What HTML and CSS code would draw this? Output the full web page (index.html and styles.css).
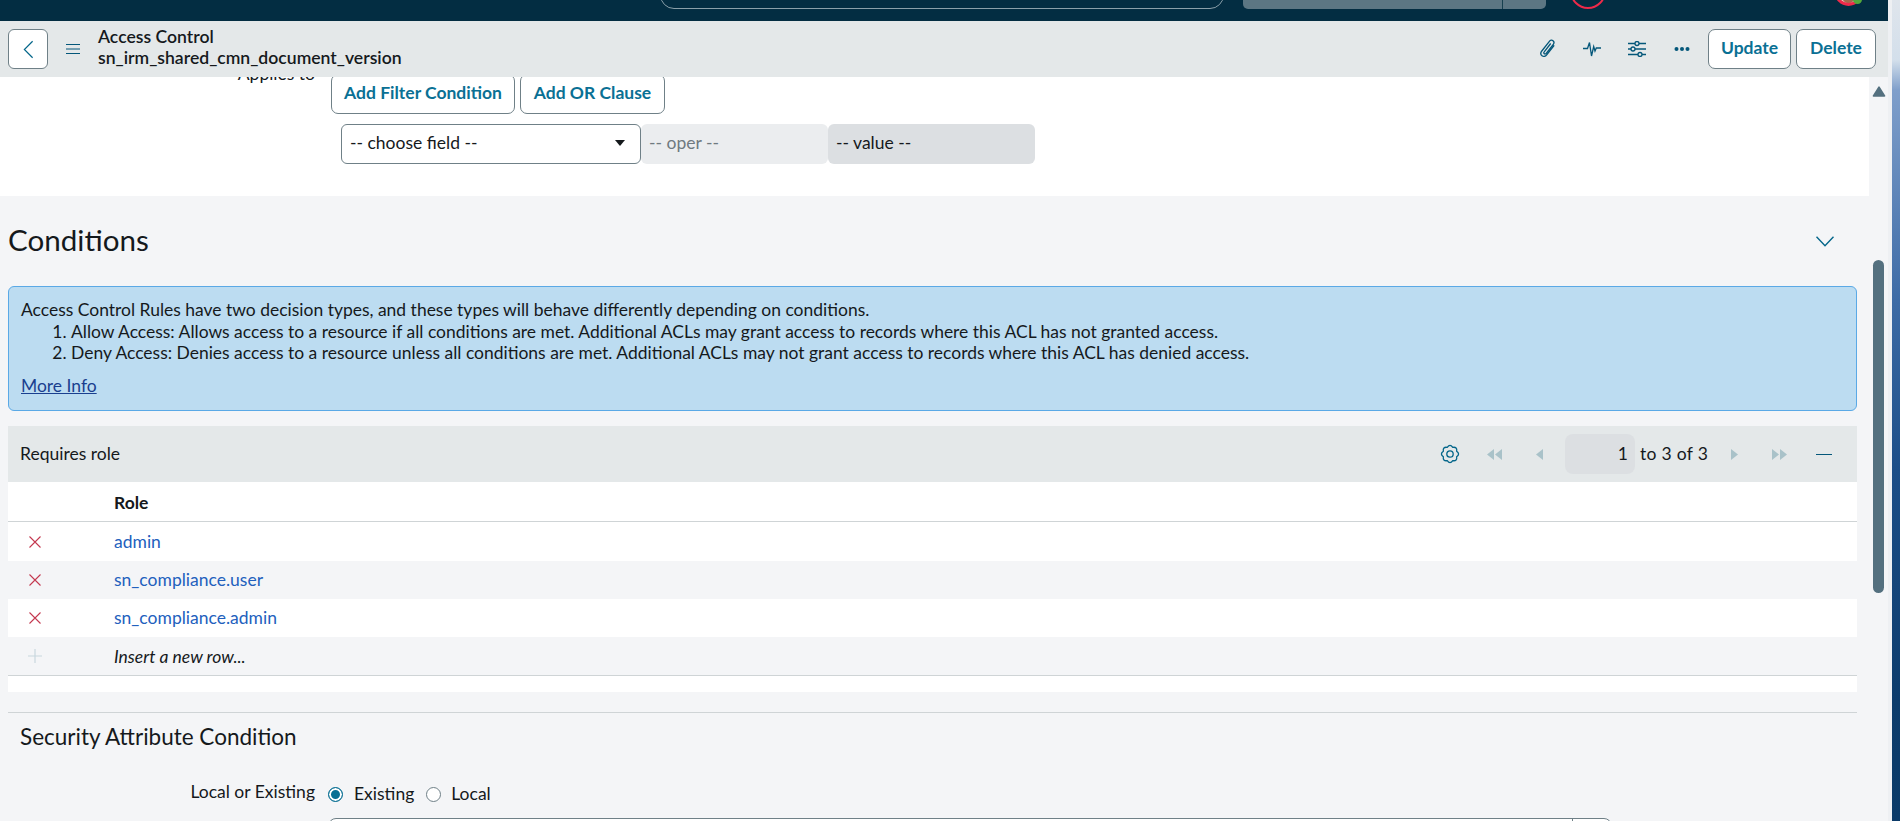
FILE: index.html
```html
<!DOCTYPE html>
<html lang="en">
<head>
<meta charset="utf-8">
<title>Access Control</title>
<link rel="stylesheet" href="styles.css">
</head>
<body>
<div class="screen">
  <div class="app">
    <div class="topbar">
      <div class="top-search"></div>
      <div class="top-scope"><span class="top-scope-main"></span><span class="top-scope-end"></span></div>
      <div class="top-ring"></div>
      <div class="top-avatar"><span class="avatar-face"></span><span class="avatar-dot"></span></div>
    </div>

    <header class="formbar">
      <button class="back-btn" aria-label="Back">
        <svg class="ico-back" viewBox="0 0 12 20"><path d="M10.5 1 1.5 10l9 9"/></svg>
      </button>
      <svg class="ico-menu" viewBox="0 0 14 10"><path d="M0 .5h14M0 5h14M0 9.500h14"/></svg>
      <div class="form-title">
        <div>Access Control</div>
        <div>sn_irm_shared_cmn_document_version</div>
      </div>
      <div class="form-actions">
        <svg class="ico ico-clip" viewBox="0 0 18 20"><path d="M15.200 6.300 7.700 15.900c-1.300 1.700-3.300 2-4.700.9-1.400-1.100-1.500-3.100-.2-4.800l7.600-9.700c.9-1.200 2.500-1.500 3.600-.6 1.100.9 1.200 2.400.3 3.600l-7.100 9.100c-.5.6-1.300.8-1.900.3-.6-.5-.6-1.300-.1-1.900l6.500-8.300"/></svg>
        <svg class="ico ico-pulse" viewBox="0 0 18 18"><path d="M0 8.500h4.500L6.500 2.500 8.500 16l2.200-9.500 1.300 4.500 1.300-3H18"/></svg>
        <svg class="ico ico-sliders" viewBox="0 0 18 16"><path d="M0 2.500h7M11 2.500h7M0 8h3M7 8h11M0 13.500h10M14 13.500h4"/><circle cx="9" cy="2.500" r="2"/><circle cx="5" cy="8" r="2"/><circle cx="12" cy="13.500" r="2"/></svg>
        <svg class="ico ico-dots" viewBox="0 0 16 6"><circle cx="2.500" cy="3" r="2"/><circle cx="8" cy="3" r="2"/><circle cx="13.500" cy="3" r="2"/></svg>
        <button class="btn btn-update">Update</button>
        <button class="btn btn-delete">Delete</button>
      </div>
    </header>

    <div class="viewport">
      <main class="content">
        <section class="filter">
          <div class="filter-head">
            <span class="filter-label">Applies to</span>
            <button class="btn btn-filter">Add Filter Condition</button>
            <button class="btn btn-or">Add OR Clause</button>
          </div>
          <div class="filter-row">
            <div class="fld-choose"><span>-- choose field --</span><i class="caret"></i></div>
            <div class="fld-oper">-- oper --</div>
            <div class="fld-value">-- value --</div>
          </div>
        </section>

        <div class="cond-head">
          <h2>Conditions</h2>
          <svg class="ico-chev" viewBox="0 0 18 11"><path d="M.5.8 9 9.800 17.500.8"/></svg>
        </div>

        <div class="notice">
          <div>Access Control Rules have two decision types, and these types will behave differently depending on conditions.</div>
          <ol>
            <li>Allow Access: Allows access to a resource if all conditions are met. Additional ACLs may grant access to records where this ACL has not granted access.</li>
            <li>Deny Access: Denies access to a resource unless all conditions are met. Additional ACLs may not grant access to records where this ACL has denied access.</li>
          </ol>
          <a class="more" href="#">More Info</a>
        </div>

        <div class="related">
          <div class="rel-bar">
            <span class="rel-title">Requires role</span>
            <div class="pager">
              <svg class="ico-gear" viewBox="-1 -1 22 22"><path d="M16.650 7.240Q20.500 10 16.650 12.760 17.420 17.420 12.760 16.650 10 20.500 7.240 16.650 2.580 17.420 3.350 12.760-.5 10 3.350 7.240 2.580 2.580 7.240 3.350 10-.5 12.760 3.350 17.420 2.580 16.650 7.240Z"/><circle cx="10" cy="10" r="3.200"/></svg>
              <svg class="pg pg-first" viewBox="0 0 15 11"><path d="M7 0v11L0 5.500ZM15 0v11L8 5.500Z"/></svg>
              <svg class="pg pg-prev" viewBox="0 0 7 11"><path d="M7 0v11L0 5.500Z"/></svg>
              <div class="pg-input">1</div>
              <span class="pg-text">to 3 of 3</span>
              <svg class="pg pg-next" viewBox="0 0 7 11"><path d="M0 0v11l7-5.500Z"/></svg>
              <svg class="pg pg-last" viewBox="0 0 15 11"><path d="M0 0v11l7-5.500ZM8 0v11l7-5.500Z"/></svg>
              <span class="pg-min"></span>
            </div>
          </div>
          <div class="tbl">
            <div class="tr th"><span class="c1"></span><span>Role</span></div>
            <div class="tr"><span class="c1"><svg class="ico-x" viewBox="0 0 12 12"><path d="m.5.500 11 11M11.500.500l-11 11"/></svg></span><a href="#">admin</a></div>
            <div class="tr alt"><span class="c1"><svg class="ico-x" viewBox="0 0 12 12"><path d="m.5.500 11 11M11.500.500l-11 11"/></svg></span><a href="#">sn_compliance.user</a></div>
            <div class="tr"><span class="c1"><svg class="ico-x" viewBox="0 0 12 12"><path d="m.5.500 11 11M11.500.500l-11 11"/></svg></span><a href="#">sn_compliance.admin</a></div>
            <div class="tr alt insert"><span class="c1"><svg class="ico-plus" viewBox="0 0 14 14"><path d="M7 0v14M0 7h14"/></svg></span><em>Insert a new row...</em></div>
            <div class="tbl-foot"></div>
          </div>
        </div>

        <section class="sac">
          <h3>Security Attribute Condition</h3>
          <div class="sac-row">
            <span class="sac-label">Local or Existing</span>
            <span class="radio radio-on"></span><span class="radio-text">Existing</span>
            <span class="radio"></span><span class="radio-text">Local</span>
          </div>
          <div class="sac-input"><span class="sac-input-end"></span></div>
        </section>
      </main>
      <aside class="vscroll">
        <svg class="sc-up" viewBox="0 0 12 10"><path d="M6 1 11 9H1Z"/></svg>
        <div class="sc-thumb"></div>
      </aside>
    </div>
  </div>
  <div class="strip"></div>
  <div class="desktop"></div>
</div>
</body>
</html>
```

FILE: styles.css
```css
* { box-sizing: border-box; }
html, body { margin: 0; padding: 0; height: 100%; overflow: hidden; }
body { font-family: Lato, "Open Sans", sans-serif; font-size: 17.500px; color: #15191c; background: #f4f5f7; }
button { font-family: inherit; }
.screen { display: flex; height: 821px; overflow: hidden; }
.app { width: 1888px; flex: none; display: flex; flex-direction: column; background: #f4f5f7; }
.strip { width: 4px; flex: none; background: #eef0f3; }
.desktop { flex: 1; background: linear-gradient(180deg, #dfe5ec 0, #d3dfeb 60px, #7f9fcb 90px, #3d6ba6 300px, #1c4e88 470px, #0c3c6c 700px, #0a3a68 100%); }

/* top bar */
.topbar { height: 21px; flex: none; background: #032d42; display: flex; align-items: flex-end; overflow: hidden; }
.top-search { width: 564px; height: 30px; flex: none; margin: 0 0 12px 660px; border: 1px solid #8a9fa9; border-radius: 14px; }
.top-scope { width: 303px; height: 30px; flex: none; margin: 0 0 12px 19px; display: flex; border-radius: 5px; overflow: hidden; background: #5c7683; }
.top-scope-main { width: 260px; border-right: 1px solid #17404f; }
.top-scope-end { flex: 1; }
.top-ring { width: 36px; height: 36px; flex: none; margin: 0 0 12px 24px; border: 2px solid #ee2a4a; border-radius: 50%; }
.top-avatar { position: relative; width: 29px; height: 30px; flex: none; margin: 0 0 15px 228px; border-radius: 50%; background: #ee2a4a; display: flex; justify-content: center; align-items: flex-end; }
.avatar-face { width: 21px; height: 21px; margin-bottom: 3px; border-radius: 50%; background: radial-gradient(circle at 50% 70%, #a46a4d 0 6px, #ead7c8 7px); }
.avatar-dot { position: absolute; right: 1px; bottom: 2px; width: 9px; height: 9px; border-radius: 50%; background: #53a83a; }

/* form header */
.formbar { position: relative; z-index: 2; height: 56px; flex: none; display: flex; align-items: center; padding: 0 12px 0 8px; background: #e4e8e9; }
.back-btn { width: 40px; height: 40px; flex: none; padding: 0; display: flex; align-items: center; justify-content: center; background: #fff; border: 1px solid #6f8087; border-radius: 6px; }
.ico-back { width: 11px; height: 19px; fill: none; stroke: #04668a; stroke-width: 1.300; }
.ico-menu { width: 14px; height: 10px; flex: none; margin-left: 18px; fill: none; stroke: #04577a; stroke-width: 1; }
.form-title { margin: -5px 0 0 18px; font-size: 17.600px; font-weight: 600; line-height: 21px; color: #15191c; }
.form-actions { margin-left: auto; display: flex; align-items: center; }
.ico { flex: none; fill: none; stroke: #04577a; stroke-width: 1.300; }
.ico-clip { width: 18px; height: 20px; margin-right: 26px; }
.ico-pulse { width: 18px; height: 18px; margin-right: 27px; }
.ico-sliders { width: 18px; height: 16px; margin-right: 28px; }
.ico-dots { width: 16px; height: 6px; margin-right: 18px; fill: #04577a; stroke: none; }
.btn { height: 40px; padding: 0 0 3px; background: #fff; border: 1px solid #6f8087; border-radius: 7px; color: #0a7094; font-size: 17.500px; font-weight: 700; }
.btn-update { width: 83px; margin-right: 5px; }
.btn-delete { width: 80px; }

/* scroll viewport */
.viewport { flex: 1; min-height: 0; display: flex; overflow: hidden; }
.content { width: 1869px; flex: none; display: flex; flex-direction: column; }
.vscroll { flex: 1; display: flex; flex-direction: column; align-items: center; padding-top: 9px; background: #f4f5f7; }
.sc-up { width: 14px; height: 11px; fill: #54707f; stroke: #54707f; stroke-width: 1.500; stroke-linejoin: round; }
.sc-thumb { width: 11px; height: 333px; margin-top: 163px; background: #54707f; border-radius: 6px; }

/* filter */
.filter { height: 119px; flex: none; background: #fff; }
.filter-head { display: flex; align-items: flex-start; margin-top: -3px; }
.filter-label { width: 315px; flex: none; margin-top: -10px; text-align: right; line-height: 20px; }
.btn-filter { width: 184px; margin-left: 16px; }
.btn-or { width: 145px; margin-left: 5px; }
.filter-row { display: flex; margin: 10px 0 0 341px; }
.fld-choose, .fld-oper, .fld-value { height: 40px; display: flex; align-items: center; padding: 0 0 3px 8px; }
.fld-choose { width: 300px; justify-content: space-between; padding-right: 15px; background: #fff; border: 1px solid #6f8087; border-radius: 6px; }
.caret { width: 0; height: 0; border-left: 5.500px solid transparent; border-right: 5.500px solid transparent; border-top: 6px solid #15191c; }
.fld-oper { width: 187px; background: #ebedef; border-radius: 6px; color: #6f7a80; }
.fld-value { width: 207px; background: #dcdfe2; border-radius: 6px; }

/* conditions */
.cond-head { height: 90px; flex: none; display: flex; align-items: center; justify-content: space-between; padding: 0 35px 0 8px; }
.cond-head h2 { margin: 0 0 3px; font-size: 29.600px; font-weight: 400; line-height: 40px; }
.ico-chev { width: 18px; height: 11px; fill: none; stroke: #04668a; stroke-width: 1.400; }

.notice { width: 1849px; height: 125px; flex: none; margin-left: 8px; padding: 12px 12px 0; font-size: 17.480px; background: #bcdcf1; border: 1px solid #5aa9e6; border-radius: 6px; line-height: 21.500px; }
.notice ol { margin: 0; padding-left: 50px; }
.more { display: block; margin-top: 11px; color: #1a3f8f; }

/* related list */
.related { width: 1849px; flex: none; margin: 15px 0 0 8px; }
.rel-bar { height: 56px; display: flex; align-items: center; justify-content: space-between; padding-left: 12px; background: #e4e8e9; }
.rel-title { margin-bottom: 2px; }
.pager { display: flex; align-items: center; }
.ico-gear { width: 22px; height: 22px; flex: none; margin-right: 26px; fill: none; stroke: #04668a; stroke-width: 1.300; }
.pg { height: 11px; flex: none; fill: #a9c2c9; }
.pg-first { width: 15px; margin-right: 34px; }
.pg-prev { width: 7px; margin-right: 22px; }
.pg-input { width: 70px; height: 40px; flex: none; padding-right: 7px; line-height: 39px; text-align: right; background: #dcdfe2; border-radius: 8px; }
.pg-text { width: 69px; flex: none; margin: 0 0 1px 5px; white-space: nowrap; letter-spacing: .3px; }
.pg-next { width: 7px; margin-left: 22px; }
.pg-last { width: 15px; margin-left: 34px; }
.pg-min { width: 16px; height: 1px; flex: none; margin: 0 25px 0 29px; background: #04577a; }

.tr { height: 38px; display: flex; align-items: center; background: #fff; }
.tr > a { margin-bottom: 1px; }
.c1 { width: 106px; flex: none; display: flex; justify-content: flex-start; padding-left: 21px; }
.th { height: 40px; padding-top: 1px; font-weight: 700; border-bottom: 1.500px solid #cfd4d6; }
.tr:nth-child(2) { height: 39px; }
.alt { background: #f4f5f7; }
.tr a { color: #2260bd; text-decoration: none; }
.insert { height: 39px; border-bottom: 1.500px solid #cfd4d6; }
.ico-x { width: 12px; height: 12px; fill: none; stroke: #c4384f; stroke-width: 1.100; }
.ico-plus { width: 14px; height: 14px; margin-left: -1px; fill: none; stroke: #c8d8de; stroke-width: 1.200; }
.tbl-foot { height: 16px; background: #fff; }

/* security attribute condition */
.sac { width: 1849px; flex: none; margin: 20px 0 0 8px; border-top: 1.500px solid #cfd4d6; }
.sac h3 { margin: 9px 0 0 12px; font-size: 22.500px; font-weight: 400; line-height: 30px; }
.sac-row { display: flex; align-items: center; margin-top: 30px; height: 24px; }
.sac-label { width: 307px; flex: none; text-align: right; position: relative; top: -3px; }
.radio { width: 15px; height: 15px; flex: none; margin-left: 13px; background: #fff; border: 1.500px solid #6f8087; border-radius: 50%; }
.radio-on { border-color: #0a7094; box-shadow: inset 0 0 0 2px #fff; background: #0a7094; }
.radio-text { margin: 0 0 1px 11px; }
.radio-text + .radio { margin-left: 12px; }
.radio-text:last-child { margin-left: 10px; }
.sac-input { width: 1284px; height: 30px; margin: 12px 0 0 320px; border: 1px solid #6f8087; border-radius: 8px; background: #fff; display: flex; justify-content: flex-end; }
.sac-input-end { width: 39px; border-left: 1px solid #6f8087; }
```
